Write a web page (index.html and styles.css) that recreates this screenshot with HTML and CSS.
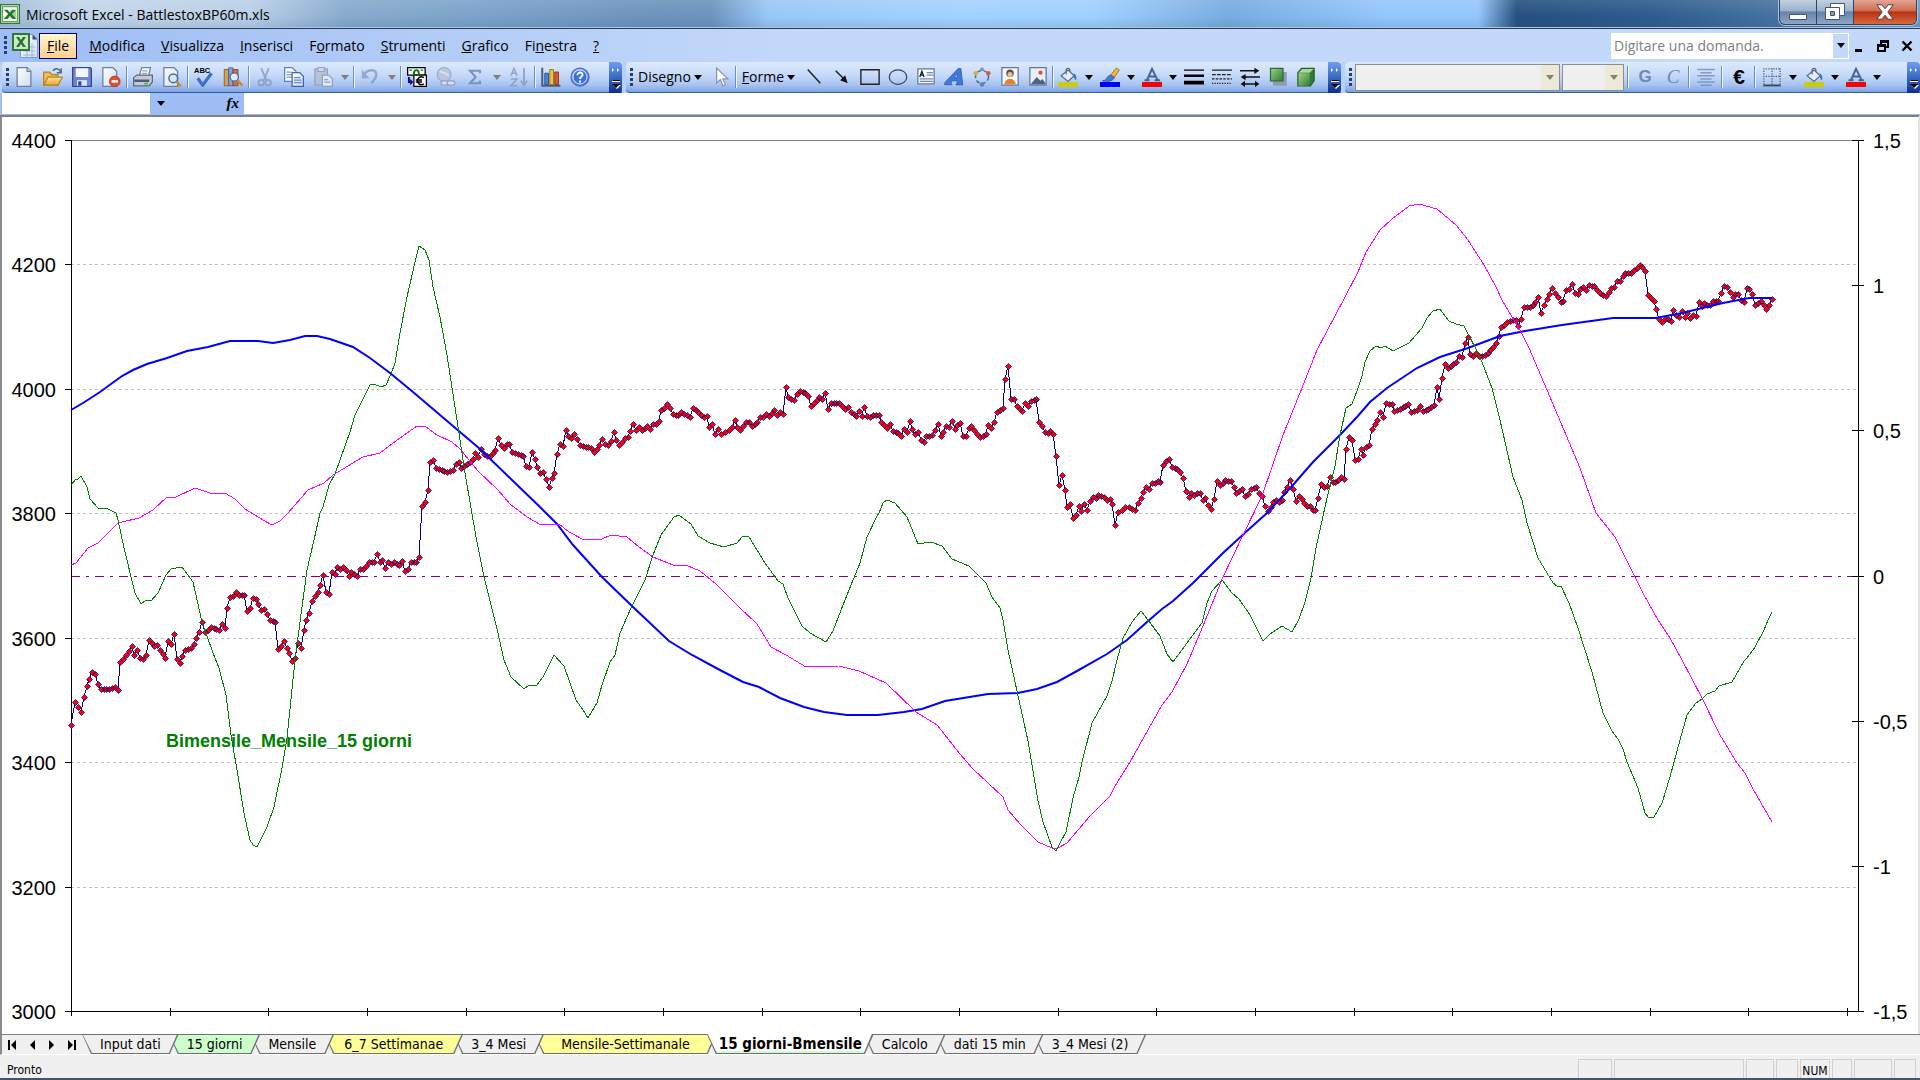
FILE: index.html
```html
<!DOCTYPE html>
<html lang="it">
<head>
    <meta charset="UTF-8">
    <meta name="viewport" content="width=device-width, initial-scale=1.0">
    <title>Microsoft Excel - BattlestoxBP60m.xls</title>
    <link rel="stylesheet" href="styles.css">
</head>
<body>
    <svg class="sprite" aria-hidden="true">
        <defs>
            <linearGradient id="greenFill" x1="0" y1="0" x2="1" y2="1"><stop offset="0" stop-color="#9fd08d"/><stop offset="1" stop-color="#2f7d33"/></linearGradient>
            <linearGradient id="blueFill" x1="0" y1="0" x2="1" y2="1"><stop offset="0" stop-color="#a9c8fa"/><stop offset="1" stop-color="#2f5fc0"/></linearGradient>
            <linearGradient id="paperFill" x1="0" y1="0" x2="1" y2="1"><stop offset="0" stop-color="#ffffff"/><stop offset="1" stop-color="#cfdcf2"/></linearGradient>
            <linearGradient id="goldFill" x1="0" y1="0" x2="0" y2="1"><stop offset="0" stop-color="#ffe9a0"/><stop offset="1" stop-color="#eda02c"/></linearGradient>
        </defs>
        <symbol id="i-arrow" viewBox="0 0 8 5"><path d="M0 0h8L4 5z" fill="currentColor"/></symbol>
        <symbol id="i-more" viewBox="0 0 13 31">
            <path d="M3 6l2 2-2 2zM8 6l2 2-2 2z" fill="#fff"/>
            <path d="M4 18h7v1H4z" fill="#000"/><path d="M3 19h8v1H3z" fill="#fff"/>
            <path d="M4 23h8l-4 4z" fill="#fff"/><path d="M3 22h8l-4 4z" fill="#000"/>
        </symbol>
        <symbol id="i-bucket" viewBox="0 0 16 16">
            <path d="M2.500 7L8 2.500l5 4.500-5 4.500z" fill="#e4ecf8" stroke="#556c92"/>
            <path d="M6.500 6V2.500c0-2 3-2 3 0V4" fill="none" stroke="#556c92"/>
            <path d="M12.500 5c2 1 2.500 3 2 5.500-1.500-.5-2-2-2-5.500z" fill="#3c6fc4"/>
            <path d="M0 12h16v4H0z" fill="#cccc0a"/>
        </symbol>
        <symbol id="i-fontcolor" viewBox="0 0 16 16">
            <path d="M2 10.500h4M10 10.500h4.500M4 10.500L8 1.500l4.500 9M5.500 7.500h5" fill="none" stroke="#44649c" stroke-width="1.600"/>
            <path d="M0 12h16v4H0z" fill="#f00"/>
        </symbol>
        <symbol id="i-excel" viewBox="0 0 16 16">
            <path d="M.5.5h15v15H.5z" fill="#e7f2e4" stroke="#2b7a35"/>
            <path d="M2 2h12v12H2z" fill="#fff" stroke="#63a663"/>
            <path d="M8 5h5v6H8z" fill="#a9d19d"/>
            <path d="M3 4.500h3l2 2.300 2-2.300h3L9.500 8l3.500 4h-3L8 9.500 6 12H3l3.500-4z" fill="#1f7a2e"/>
        </symbol>
    </svg>

    <header class="titlebar">
        <svg class="app-icon"><use href="#i-excel"/></svg>
        <h1>Microsoft Excel - BattlestoxBP60m.xls</h1>
        <div class="window-buttons">
            <button class="win-min" aria-label="Riduci a icona"><svg viewBox="0 0 18 8"><path d="M.5 1.500h17v5H.5z" fill="#fff" stroke="#45566d"/></svg></button>
            <button class="win-max" aria-label="Ripristina"><svg viewBox="0 0 20 18"><path d="M5.500.5h14v12h-14z" fill="#fff" stroke="#45566d"/><path d="M.5 4.500h14v12H.5z" fill="#fff" stroke="#45566d"/><path d="M5.500 8.500h4v4h-4z" fill="#7c98bd" stroke="#45566d"/></svg></button>
            <button class="win-close" aria-label="Chiudi"><svg viewBox="0 0 18 16"><path d="M.8.8h5L9 4.800 12.200.8h5L11.800 8l5.400 7.200h-5L9 11.200l-3.200 4h-5L6.200 8z" fill="#fff" stroke="#5a3a3a"/></svg></button>
        </div>
    </header>

    <nav class="menubar">
        <span class="grip"></span>
        <svg class="doc-icon" viewBox="0 0 26 26">
            <path d="M8.500 1.500h12l5 5v18h-17z" fill="url(#paperFill)" stroke="#7f9cc9"/>
            <path d="M20.500 1.500v5h5z" fill="#3b5174"/>
            <path d="M11 14h12M11 18h12M11 22h12M15 10v14M20 10v14" stroke="#9db7de"/>
            <path d="M1 1h16v16H1z" fill="#cfe6c8" stroke="#2b7a35" stroke-width="2"/>
            <path d="M4 4h3l2 3 2-3h3l-3.500 5 3.500 5h-3l-2-3-2 3H4l3.500-5z" fill="#1f7a2e"/>
        </svg>
        <button class="menu active"><u>F</u>ile</button>
        <button class="menu"><u>M</u>odifica</button>
        <button class="menu"><u>V</u>isualizza</button>
        <button class="menu"><u>I</u>nserisci</button>
        <button class="menu">F<u>o</u>rmato</button>
        <button class="menu"><u>S</u>trumenti</button>
        <button class="menu"><u>G</u>rafico</button>
        <button class="menu">Fi<u>n</u>estra</button>
        <button class="menu"><u>?</u></button>
        <div class="ask">
            <input type="text" placeholder="Digitare una domanda." aria-label="Digitare una domanda">
            <button aria-label="Domande recenti"><svg class="arrow"><use href="#i-arrow"/></svg></button>
        </div>
        <div class="doc-buttons">
            <button aria-label="Riduci a icona finestra"><svg viewBox="0 0 12 12"><path d="M2 9h7v3H2z"/></svg></button>
            <button aria-label="Ripristina finestra"><svg viewBox="0 0 12 12"><path d="M3 0h9v8H9v4H0V4h3zM5 3v1h4v2h1V3zM2 7v3h5V7z" fill-rule="evenodd"/></svg></button>
            <button aria-label="Chiudi finestra"><svg viewBox="0 0 12 12"><path d="M1.500 1.500l9 9M10.500 1.500l-9 9" stroke="#000" stroke-width="2.400"/></svg></button>
        </div>
    </nav>

    <div class="toolbars">
        <div class="toolbar standard">
            <span class="grip"></span>
            <button class="tool" aria-label="Nuovo"><svg viewBox="0 0 16 16"><path d="M2.500.5h8l3 3v12h-11z" fill="url(#paperFill)" stroke="#6b7f9f"/><path d="M10.500.5v3h3" fill="#dfe8f7" stroke="#6b7f9f"/></svg></button>
            <button class="tool" aria-label="Apri"><svg viewBox="0 0 16 16"><path d="M.5 14.500V4h5l1.500 2h5v8.500z" fill="#f2bd4f" stroke="#b9812a"/><path d="M.5 14.500L4 8h11.500l-3.500 6.500z" fill="url(#goldFill)" stroke="#b9812a"/><path d="M8 3c2-2.500 5-2 6 1M14.500 1v3.500H11" fill="none" stroke="#4b6a96" stroke-width="1.200"/></svg></button>
            <button class="tool" aria-label="Salva"><svg viewBox="0 0 16 16"><path d="M.5.5h14l1 1v14H.5z" fill="#6f86d6" stroke="#34468f"/><path d="M3 1h10v7H3z" fill="#f4f7ff"/><path d="M4 10.500h8V15H4z" fill="#dbe3f7"/><path d="M5 11.500h2.500V15H5z" fill="#34468f"/></svg></button>
            <button class="tool" aria-label="Autorizzazione"><svg viewBox="0 0 16 16"><path d="M1.500.5h8l3 3v12h-11z" fill="url(#paperFill)" stroke="#6b7f9f"/><circle cx="11" cy="11.500" r="4.300" fill="#e2502a" stroke="#a8381c" stroke-width=".6"/><path d="M8.500 10.500h5v2h-5z" fill="#fff"/></svg></button>
            <span class="sep"></span>
            <button class="tool" aria-label="Stampa"><svg viewBox="0 0 16 16"><path d="M5 7L7 .5h7L12.500 7z" fill="#fff" stroke="#73839e"/><path d="M7.500 3h4M7 5h4" stroke="#8fa0bb"/><path d="M.5 8.500L3 6.500h12.500V12l-2.500 3H.5z" fill="#c5ccd9" stroke="#5d6a80"/><path d="M1 10h12v2H1z" fill="#4e5d77"/><path d="M9 12.500h3V14H9z" fill="#53b33f"/></svg></button>
            <button class="tool" aria-label="Anteprima di stampa"><svg viewBox="0 0 16 16"><path d="M1.500.5h8l3 3v12h-11z" fill="url(#paperFill)" stroke="#6b7f9f"/><circle cx="9" cy="9" r="3.500" fill="#cfe6fb" stroke="#4f6a92" stroke-width="1.200"/><path d="M11.500 11.500l3.500 4" stroke="#c98a3c" stroke-width="2"/></svg></button>
            <span class="sep"></span>
            <button class="tool" aria-label="Controllo ortografia"><svg viewBox="0 0 16 16"><text x="0" y="5" class="abc">ABC</text><path d="M3 9l4 5.500L14 5" fill="none" stroke="#3f70cf" stroke-width="2.600"/></svg></button>
            <button class="tool" aria-label="Ricerche"><svg viewBox="0 0 16 16"><path d="M1 2h3.500v13H1z" fill="#d8a24a" stroke="#7d5f2c" stroke-width=".7"/><path d="M4.500.7H8V15H4.500z" fill="#86a4d9" stroke="#465f93" stroke-width=".7"/><path d="M8 2h4v13H8z" fill="#d06f45" stroke="#81452a" stroke-width=".7"/><circle cx="9" cy="8" r="3.300" fill="#dcecfb" stroke="#4f6a92"/><path d="M11.500 10.500l4 4.500" stroke="#c98a3c" stroke-width="2"/></svg></button>
            <span class="sep"></span>
            <button class="tool" aria-label="Taglia" disabled><svg viewBox="0 0 16 16"><path d="M5 1l4 9.500M11 1l-4 9.500" stroke="#8b9cbd" stroke-width="1.500"/><circle cx="5" cy="12.500" r="2.200" fill="none" stroke="#8b9cbd" stroke-width="1.500"/><circle cx="10.500" cy="12.500" r="2.200" fill="none" stroke="#8b9cbd" stroke-width="1.500"/></svg></button>
            <button class="tool" aria-label="Copia"><svg viewBox="0 0 16 16"><path d="M.5.5h6l3 3v8h-9z" fill="#fff" stroke="#5c7fc0"/><path d="M2 4h4M2 6h5M2 8h5" stroke="#7c9ad0"/><path d="M6.500 4.500h6l3 3v8h-9z" fill="url(#paperFill)" stroke="#3f65ad"/><path d="M8 8.500h5M8 10.500h6M8 12.500h6" stroke="#6489cc"/></svg></button>
            <button class="tool" aria-label="Incolla" disabled><svg viewBox="0 0 16 16"><path d="M1.500 1.500h10v13h-10z" fill="#b3bfd6" stroke="#8b9cbd"/><path d="M4 .5h5v3H4z" fill="#dbe3f2" stroke="#8b9cbd"/><path d="M7.500 6.500h5l3 3v6h-8z" fill="#e6edf9" stroke="#8b9cbd"/><path d="M9 10h3M9 12h5" stroke="#8b9cbd"/></svg></button>
            <button class="drop" aria-label="Opzioni Incolla" disabled><svg class="arrow"><use href="#i-arrow"/></svg></button>
            <span class="sep"></span>
            <button class="tool" aria-label="Annulla" disabled><svg viewBox="0 0 16 16"><path d="M3 6c4-5 10-4 10 0 0 3-2 5-4 7" fill="none" stroke="#8d9fc9" stroke-width="2"/><path d="M1.500 2v7h6z" fill="#8d9fc9"/></svg></button>
            <button class="drop" aria-label="Elenco Annulla" disabled><svg class="arrow"><use href="#i-arrow"/></svg></button>
            <span class="sep"></span>
            <button class="tool" aria-label="Conversione Euro"><svg viewBox="0 0 16 16"><path d="M.5.5h14v6H.5z" fill="#fff" stroke="#000"/><path d="M2 2h2v1H2zM11 2h2v1h-2z" fill="#008000"/><path d="M5.500 5.500c0-4 4-4 4 0" fill="none" stroke="#008000" stroke-width="1.500"/><path d="M5.500 6.500h10v9h-10z" fill="#fff" stroke="#000"/><path d="M13.500 8.500c-3-1.500-5 0-5 2.500s2 4 5 2.500M7 10.300h5M7 12h5" fill="none" stroke="#000" stroke-width="1.200"/><path d="M1.500 8v4h1" fill="none" stroke="#00008b" stroke-width="1.500"/><path d="M2.500 9.500v5L5 12z" fill="#00008b"/></svg></button>
            <button class="tool" aria-label="Collegamento ipertestuale" disabled><svg viewBox="0 0 16 16"><circle cx="6.500" cy="6" r="5.500" fill="#b9c4d9" stroke="#97a6c2"/><path d="M3 3c3 3 4 0 7 4" fill="none" stroke="#dbe3f1" stroke-width="1.500"/><rect x="4" y="11" width="6" height="3.500" rx="1.700" fill="#dbe3f1" stroke="#8b9cbd"/><rect x="9" y="11" width="6" height="3.500" rx="1.700" fill="#dbe3f1" stroke="#8b9cbd"/></svg></button>
            <button class="tool" aria-label="Somma automatica" disabled><svg viewBox="0 0 16 16"><path d="M12 5V3H4l4.500 5L4 13h8v-2" fill="none" stroke="#6f88bb" stroke-width="1.700"/></svg></button>
            <button class="drop" aria-label="Funzioni" disabled><svg class="arrow"><use href="#i-arrow"/></svg></button>
            <button class="tool" aria-label="Ordinamento crescente" disabled><svg viewBox="0 0 16 16"><path d="M1.500 7L4 1l2.500 6M2.300 5h3.400M1.500 9.500h5l-5 5.500h5" fill="none" stroke="#8b9cbd" stroke-width="1.200"/><path d="M12 1v12M9.500 11l2.500 3.500 2.500-3.500" fill="none" stroke="#8b9cbd" stroke-width="1.500"/></svg></button>
            <span class="sep"></span>
            <button class="tool" aria-label="Creazione guidata Grafico"><svg viewBox="0 0 16 16"><path d="M1 .5v14.500h14.500" fill="none" stroke="#4a5c80" stroke-width="1.600"/><path d="M3 5h3v9H3z" fill="#4d80dc" stroke="#284e95" stroke-width=".7"/><path d="M7 2h3v12H7z" fill="#f1c23c" stroke="#936f14" stroke-width=".7"/><path d="M11 4h3v10h-3z" fill="#dc5a31" stroke="#8a2f14" stroke-width=".7"/></svg></button>
            <button class="tool" aria-label="Guida"><svg viewBox="0 0 16 16"><circle cx="8" cy="8" r="7.200" fill="url(#blueFill)" stroke="#4a6fb5"/><circle cx="8" cy="8" r="5.600" fill="#3a72da" stroke="#dbe8ff" stroke-width=".8"/><path d="M6 6.500c0-3 4.500-2.500 4 0-.3 1-2 1.400-2 3" fill="none" stroke="#fff" stroke-width="1.500"/><path d="M7.200 10.800h1.600v1.500H7.200z" fill="#fff"/></svg></button>
            <button class="more" aria-label="Opzioni barra Standard"><svg><use href="#i-more"/></svg></button>
        </div>

        <div class="toolbar drawing">
            <span class="grip"></span>
            <button class="text-tool"><span>Dise<u>g</u>no</span><svg class="arrow"><use href="#i-arrow"/></svg></button>
            <button class="tool" aria-label="Seleziona oggetti"><svg viewBox="0 0 16 16"><path d="M4.500.8v12l3-2.800 2 5 2-.8-2-4.700h4z" fill="#fff" stroke="#8796b3"/></svg></button>
            <span class="sep"></span>
            <button class="text-tool"><span><u>F</u>orme</span><svg class="arrow"><use href="#i-arrow"/></svg></button>
            <button class="tool" aria-label="Linea"><svg viewBox="0 0 16 16"><path d="M3 2l10 11" stroke="#222" stroke-width="1.200"/></svg></button>
            <button class="tool" aria-label="Freccia"><svg viewBox="0 0 16 16"><path d="M3 3l7 7" stroke="#222" stroke-width="1.200"/><path d="M12.500 13L6.500 10.500l4-4z" fill="#111"/></svg></button>
            <button class="tool" aria-label="Rettangolo"><svg viewBox="0 0 16 16"><path d="M.7 2.200h14.600v11.600H.7z" fill="none" stroke="#222" stroke-width="1.100"/></svg></button>
            <button class="tool" aria-label="Ovale"><svg viewBox="0 0 16 16"><ellipse cx="8" cy="8" rx="7" ry="5.800" fill="none" stroke="#3b4657"/></svg></button>
            <button class="tool" aria-label="Casella di testo"><svg viewBox="0 0 16 16"><path d="M1.500 1.500h13v12h-13z" fill="#f7faff" stroke="#61789f"/><path d="M3 8l1.700-4.500L6.400 8M3.500 6.500h2.400" fill="none" stroke="#111"/><path d="M8.500 4.500h5M8.500 6.500h5M3 9.500h10.500M3 11.500h10.500" stroke="#7087ae"/></svg></button>
            <button class="tool" aria-label="WordArt"><svg viewBox="0 0 16 16"><path d="M.5 13l1-1.500L11.500 1l2 .3 1.500 13H9.500l1-1.500V11H6.700l-1.200 2 1 1.200H.5zM8 8.500h2.500V5.500z" fill="#4377d9" stroke="#2a55aa" stroke-width=".6"/></svg></button>
            <button class="tool" aria-label="Diagramma"><svg viewBox="0 0 16 16"><circle cx="8" cy="8" r="5.200" fill="none" stroke="#54698f" stroke-width="1.200" stroke-dasharray="3 2"/><circle cx="3" cy="5" r="1.800" fill="#e2a93c"/><circle cx="13" cy="5" r="1.800" fill="#d9573a"/><circle cx="8" cy="14" r="1.800" fill="#5d7fd0"/><circle cx="8" cy="1.800" r="1.500" fill="#7f93b8"/></svg></button>
            <button class="tool" aria-label="ClipArt"><svg viewBox="0 0 16 16"><path d="M1.500.5h13v14h-13z" fill="#f5f8fe" stroke="#61789f"/><circle cx="8" cy="5" r="3" fill="#6b4f3b"/><circle cx="8" cy="6" r="2" fill="#e8bf98"/><path d="M3.500 14c0-6 9-6 9 0z" fill="#e6812a"/></svg></button>
            <button class="tool" aria-label="Immagine"><svg viewBox="0 0 16 16"><path d="M1.500.5h13v14h-13z" fill="#e7effb" stroke="#61789f"/><path d="M2 14l5-6 3 3 1.500-1.500L14 13v1z" fill="#4d6287"/><circle cx="10" cy="4.500" r="1.700" fill="#e2562a"/></svg></button>
            <span class="sep"></span>
            <button class="tool" aria-label="Colore riempimento"><svg><use href="#i-bucket"/></svg></button>
            <button class="drop" aria-label="Scegli riempimento"><svg class="arrow"><use href="#i-arrow"/></svg></button>
            <button class="tool" aria-label="Colore linea"><svg viewBox="0 0 16 16"><path d="M8.500 6.500L13 .8l2.500 1.500-4 6z" fill="#f0b53e" stroke="#9b7226" stroke-width=".7"/><path d="M2 11c4 0 3-4 6.500-4.500l3 2C10 11.500 6 12 2 11z" fill="#4a7bd2" stroke="#2f55a0" stroke-width=".7"/><path d="M0 12h16v4H0z" fill="#00f"/></svg></button>
            <button class="drop" aria-label="Scegli colore linea"><svg class="arrow"><use href="#i-arrow"/></svg></button>
            <button class="tool" aria-label="Colore carattere"><svg><use href="#i-fontcolor"/></svg></button>
            <button class="drop" aria-label="Scegli colore carattere"><svg class="arrow"><use href="#i-arrow"/></svg></button>
            <button class="tool" aria-label="Stile linea"><svg viewBox="0 0 16 16"><path d="M0 2h16v1H0zM0 6h16v2H0zM0 11h16v3H0z"/></svg></button>
            <button class="tool" aria-label="Stile tratteggio"><svg viewBox="0 0 16 16"><path d="M0 2.500h16" stroke="#222"/><path d="M0 6h16" stroke="#222" stroke-dasharray="3 1"/><path d="M0 9.500h16" stroke="#222" stroke-dasharray="2 1"/><path d="M0 13h16" stroke="#222" stroke-dasharray="1 1"/></svg></button>
            <button class="tool" aria-label="Stile freccia"><svg viewBox="0 0 16 16"><path d="M0 3h13M3 8h13M3 13.500h10" stroke="#111" stroke-width="1.200"/><path d="M15.500 3L11.500.5v5zM.5 8L4.500 5.500v5zM15.500 13.500L12 11v5zM.5 13.500L4 11v5z" fill="#111"/></svg></button>
            <button class="tool" aria-label="Stile ombreggiatura"><svg viewBox="0 0 16 16"><path d="M4 4h11v11H4z" fill="#8d9ab0"/><path d="M2 1h10v10H2z" fill="url(#greenFill)" stroke="#2f6b35"/></svg></button>
            <button class="tool" aria-label="Stile 3D"><svg viewBox="0 0 16 16"><path d="M1.500 4.500l3-3.500h10v10l-3 4h-10z" fill="#2f7d33" stroke="#265e2b"/><path d="M2 5h9v10H2z" fill="url(#greenFill)"/><path d="M2 4.500L5 1.500h9L11 4.500z" fill="#a7d79a"/></svg></button>
            <button class="more" aria-label="Opzioni barra Disegno"><svg><use href="#i-more"/></svg></button>
        </div>

        <div class="toolbar formatting">
            <span class="grip"></span>
            <label class="combo font-name"><select aria-label="Tipo di carattere" disabled><option></option></select><span><svg class="arrow"><use href="#i-arrow"/></svg></span></label>
            <label class="combo font-size"><select aria-label="Dimensione carattere" disabled><option></option></select><span><svg class="arrow"><use href="#i-arrow"/></svg></span></label>
            <span class="sep"></span>
            <button class="tool letter" disabled><b>G</b></button>
            <button class="tool letter serif" disabled><i>C</i></button>
            <span class="sep"></span>
            <button class="tool" aria-label="Allinea al centro" disabled><svg viewBox="0 0 16 16"><path d="M1 2h14M3.500 4.500h9M1 7h14M3.500 9.500h9M1 12h14M3.500 14.500h9" stroke="#7990bd" stroke-width="1.200"/></svg></button>
            <span class="sep"></span>
            <button class="tool letter euro"><b>€</b></button>
            <span class="sep"></span>
            <button class="tool" aria-label="Bordi"><svg viewBox="0 0 16 16"><path d="M1.500 1v13M8 1v13M14.500 1v13M1 1.500h14M1 7.500h14" stroke="#555f70" stroke-dasharray="1 1"/><path d="M1 14h14v1.500H1z" fill="#39465c"/></svg></button>
            <button class="drop" aria-label="Scegli bordi"><svg class="arrow"><use href="#i-arrow"/></svg></button>
            <button class="tool" aria-label="Riempimento cella"><svg><use href="#i-bucket"/></svg></button>
            <button class="drop" aria-label="Scegli riempimento cella"><svg class="arrow"><use href="#i-arrow"/></svg></button>
            <button class="tool" aria-label="Colore testo"><svg><use href="#i-fontcolor"/></svg></button>
            <button class="drop" aria-label="Scegli colore testo"><svg class="arrow"><use href="#i-arrow"/></svg></button>
            <button class="more" aria-label="Opzioni barra Formattazione"><svg><use href="#i-more"/></svg></button>
        </div>
    </div>

    <div class="formula-bar">
        <input class="name-box" type="text" aria-label="Casella Nome">
        <div class="fx-area">
            <button aria-label="Elenco nomi"><svg class="arrow"><use href="#i-arrow"/></svg></button>
            <button class="fx">fx</button>
        </div>
        <input class="formula" type="text" aria-label="Barra della formula">
    </div>

    <main class="sheet">
        <svg id="chart" viewBox="2 117 1916 917" role="img" aria-label="Bimensile_Mensile_15 giorni"></svg>
    </main>

    <div class="tabs">
        <div class="tab-nav">
            <button aria-label="Primo foglio"><svg viewBox="0 0 8 10"><path d="M0 0h2v10H0zM8 0v10L3 5z"/></svg></button>
            <button aria-label="Foglio precedente"><svg viewBox="0 0 8 10"><path d="M7 0v10L2 5z"/></svg></button>
            <button aria-label="Foglio successivo"><svg viewBox="0 0 8 10"><path d="M1 0v10l5-5z"/></svg></button>
            <button aria-label="Ultimo foglio"><svg viewBox="0 0 8 10"><path d="M6 0h2v10H6zM0 0v10l5-5z"/></svg></button>
        </div>
        <div class="tab-list">
            <button class="tab"><span>Input dati</span></button>
            <button class="tab green"><span>15 giorni</span></button>
            <button class="tab"><span>Mensile</span></button>
            <button class="tab yellow"><span>6_7 Settimanae</span></button>
            <button class="tab"><span>3_4 Mesi</span></button>
            <button class="tab yellow wide"><span>Mensile-Settimanale</span></button>
            <button class="tab current"><span>15 giorni-Bmensile</span></button>
            <button class="tab"><span>Calcolo</span></button>
            <button class="tab"><span>dati 15 min</span></button>
            <button class="tab"><span>3_4 Mesi (2)</span></button>
        </div>
    </div>

    <footer class="status">
        <span class="ready">Pronto</span>
        <span class="cell w34"></span>
        <span class="cell w130"></span>
        <span class="cell w28"></span>
        <span class="cell w22"></span>
        <span class="cell w30">NUM</span>
        <span class="cell w20"></span>
        <span class="cell w38"></span>
        <span class="cell w22"></span>
    </footer>
    <script src="chart.js"></script>
</body>
</html>
```
FILE: styles.css
```css
* {
    box-sizing: border-box;
}
body {
    margin: 0;
    height: 100vh;
    display: flex;
    flex-direction: column;
    overflow: hidden;
    background: #f0f0f0;
    color: #000;
    font-family: "Open Sans", "Noto Sans", sans-serif;
    font-size: 14px;
}
button {
    margin: 0;
    padding: 0;
    border: 0;
    background: none;
    color: inherit;
    font: inherit;
    display: flex;
    align-items: center;
    justify-content: center;
}
input {
    border: 0;
    padding: 0;
    min-width: 0;
    font: inherit;
    background: #fff;
}
.sprite {
    position: absolute;
    width: 0;
    height: 0;
}
.arrow {
    width: 8px;
    height: 5px;
    flex: none;
}

/* title bar */
.titlebar {
    flex: none;
    height: 29px;
    display: flex;
    align-items: flex-start;
    border-bottom: 1px solid #2d3b4d;
    box-shadow: inset 0 -1px 0 #a9c6e4;
    background:
        linear-gradient(to bottom, rgba(255, 255, 255, 0.1), rgba(255, 255, 255, 0) 60%, rgba(40, 80, 130, 0.15)),
        linear-gradient(to right, #9dbbd8 0, #c3d6ea 4%, #b9d0e7 13%, #86aacd 18%, #7ba2ca 25%, #6d94bd 33%, #6a93be 37%, #98c8f6 40%, #a2d2ff 50%, #9fd0ff 57%, #78abdf 64%, #94c6fb 72%, #94c6fb 77%, #24507f 79%, #2c5b8e 86%, #47749f 93%, #6f9cc8 100%);
}
.app-icon {
    width: 20px;
    height: 20px;
    margin-top: 4px;
}
.titlebar h1 {
    margin: 5px 0 0 6px;
    font-size: 14px;
    line-height: 20px;
    font-weight: normal;
}
.window-buttons {
    display: flex;
    height: 25px;
    margin: 0 3px 0 auto;
    border: 1px solid #33435c;
    border-top: 0;
    border-radius: 0 0 6px 6px;
    overflow: hidden;
    box-shadow: 0 0 0 1px #a9c3df;
}
.win-min,
.win-max {
    width: 37px;
    border-right: 1px solid #33435c;
    background: linear-gradient(#c3d1e1, #9cb2cd 45%, #6582a8 50%, #8ba7c9);
}
.win-close {
    width: 62px;
    background: linear-gradient(#e2a593, #cf6b50 45%, #b53312 50%, #d9683e);
}
.win-min svg { width: 18px; height: 8px; margin-top: 9px; }
.win-max svg { width: 20px; height: 18px; }
.win-close svg { width: 18px; height: 16px; }

/* menu */
.menubar {
    flex: none;
    height: 33px;
    display: flex;
    align-items: center;
    padding: 0 7px 0 4px;
    background: linear-gradient(to right, #9ebdf5, #c3d9f9 42%);
}
.grip {
    flex: none;
    width: 3px;
    height: 19px;
    background: repeating-linear-gradient(#27416b 0 3px, transparent 3px 5px);
}
.doc-icon {
    width: 26px;
    height: 26px;
    margin: 0 1px 0 5px;
}
.menu {
    height: 26px;
    padding: 0 7px;
    border: 1px solid transparent;
    line-height: 20px;
    white-space: pre;
}
.menu.active {
    margin-right: 4px;
    border-color: #000080;
    background: linear-gradient(#fff4cc, #ffd091);
}
.ask {
    margin-left: auto;
    display: flex;
    width: 238px;
    height: 26px;
    border: 1px solid #fff;
    background: #fff;
}
.ask input {
    flex: 1;
    padding-left: 2px;
    color: #808080;
}
.ask input::placeholder {
    color: #808080;
}
.ask button {
    width: 15px;
    background: #c3d9f9;
}
.doc-buttons {
    display: flex;
    gap: 12px;
    margin-left: 4px;
}
.doc-buttons svg {
    width: 12px;
    height: 12px;
}
.doc-buttons button {
    width: 12px;
}

/* toolbars */
.toolbars {
    flex: none;
    display: flex;
    gap: 4px;
    height: 31px;
    padding-left: 2px;
    background: #b9d0f8;
}
.toolbar {
    display: flex;
    align-items: center;
    height: 31px;
    padding-left: 4px;
    border-bottom: 1px solid #2f5ea9;
    border-radius: 4px 0 0 4px;
    background: linear-gradient(#dde9fc, #c5d9f8 45%, #a9c5f2 75%, #7fa3e0);
}
.standard {
    flex: none;
    width: 620px;
    gap: 1px;
}
.drawing {
    flex: none;
    width: 715px;
}
.formatting {
    flex: 1;
    min-width: 0;
}
.tool {
    flex: none;
    width: 28px;
    height: 27px;
}
.tool svg {
    width: 20px;
    height: 20px;
}
.tool:disabled svg {
    opacity: 0.85;
}
.drop {
    flex: none;
    width: 14px;
    height: 27px;
    color: #000;
}
.drop:disabled {
    color: #808080;
}
.sep {
    flex: none;
    width: 2px;
    height: 22px;
    background: linear-gradient(to right, #6a8ccb 1px, #f1f6ff 1px);
}
.text-tool {
    flex: none;
    gap: 3px;
    padding: 0 5px;
    height: 27px;
    line-height: 20px;
}
.letter {
    color: #7088b8;
    font-family: "Liberation Sans", Arial, sans-serif;
    font-size: 17px;
}
.letter.serif {
    font-family: "Liberation Serif", "Times New Roman", serif;
    font-size: 19px;
}
.letter.euro {
    color: #000;
    font-size: 21px;
}
.abc {
    font: bold 6px "Liberation Sans", Arial, sans-serif;
}
.more {
    flex: none;
    width: 13px;
    height: 31px;
    margin-left: auto;
    align-self: flex-start;
    border-radius: 0 4px 4px 0;
    background: linear-gradient(#6f9ff0, #3a69c4 50%, #0a2f8a);
}
.more svg {
    width: 13px;
    height: 31px;
}
.combo {
    display: flex;
    height: 27px;
    border: 1px solid #8f8f88;
    background: #efefef;
}
.combo select {
    flex: 1;
    min-width: 0;
    appearance: none;
    border: 0;
    background: none;
}
.combo span {
    display: flex;
    align-items: center;
    justify-content: center;
    width: 18px;
    color: #808080;
    background: #ece9d8;
}
.font-name {
    width: 205px;
    margin: 0 2px 0 3px;
}
.font-size {
    width: 62px;
    margin-right: 2px;
}
.formatting .sep {
    margin: 0 2px 0 1px;
}

/* formula bar */
.formula-bar {
    flex: none;
    display: flex;
    height: 22px;
    padding: 0 0 1px 2px;
    background: #9ebdf5;
}
.name-box {
    width: 148px;
}
.fx-area {
    display: flex;
    justify-content: space-between;
    width: 94px;
    padding: 0 5px 0 7px;
}
.fx {
    font: italic bold 15px "Liberation Serif", "Times New Roman", serif;
}
.formula {
    flex: 1;
}

/* chart */
.sheet {
    flex: 1;
    min-height: 0;
    border: 2px solid #e3e3e3;
    border-top-color: #808080;
    border-left-color: #8a8a8a;
    border-bottom: 0;
    background: #fff;
}
#chart {
    display: block;
    width: 100%;
    height: 100%;
    font-family: "Liberation Sans", Arial, sans-serif;
    font-size: 20px;
}
.axis {
    stroke: #000;
    fill: none;
    shape-rendering: crispEdges;
}
.plot-top {
    stroke: #808080;
    shape-rendering: crispEdges;
}
.grid {
    stroke: #c0c0c0;
    stroke-dasharray: 3 3;
    shape-rendering: crispEdges;
}
.zero {
    stroke: #800080;
    stroke-dasharray: 9 6 3 6;
    shape-rendering: crispEdges;
}
.series {
    fill: none;
    stroke-width: 1;
    shape-rendering: crispEdges;
}
.green-line { stroke: #008000; }
.pink-line { stroke: #f0f; }
.blue-line {
    stroke: #00f;
    stroke-width: 2;
    shape-rendering: auto;
}
.price-line { stroke: #000080; }
.price-mark {
    fill: #f00;
    stroke: #000080;
    stroke-width: 0.7;
}
.caption {
    fill: #008000;
    font-size: 18px;
    font-weight: bold;
}

/* sheet tabs */
.tabs {
    flex: none;
    display: flex;
    height: 21px;
    border-top: 1px solid #808080;
    border-bottom: 1px solid #fff;
    border-left: 2px solid #8a8a8a;
    font-family: "DejaVu Sans Condensed", "DejaVu Sans", sans-serif;
}
.tab-nav {
    display: flex;
    align-items: center;
    width: 80px;
}
.tab-nav button {
    width: 20px;
    height: 19px;
}
.tab-nav svg {
    width: 8px;
    height: 10px;
}
.tab-list {
    display: flex;
    margin-top: -1px;
}
.tab {
    position: relative;
    height: 20px;
    margin-right: -10px;
    padding: 0 18px;
    background: #707070;
    clip-path: polygon(0 0, 100% 0, calc(100% - 9px) 100%, 9px 100%);
    white-space: nowrap;
    line-height: 18px;
}
.tab::before {
    content: "";
    position: absolute;
    inset: 1px 0;
    background: #f0f0f0;
    clip-path: polygon(1px 0, calc(100% - 2px) 0, calc(100% - 10px) 100%, 10px 100%);
}
.tab span {
    position: relative;
}
.tab:nth-child(1) { z-index: 9; }
.tab:nth-child(2) { z-index: 8; }
.tab:nth-child(3) { z-index: 7; }
.tab:nth-child(4) { z-index: 6; }
.tab:nth-child(5) { z-index: 5; }
.tab:nth-child(6) { z-index: 4; }
.tab:nth-child(8) { z-index: 3; }
.tab:nth-child(9) { z-index: 2; }
.tab.green::before { background: #cfc; }
.tab.yellow::before { background: #ff9; }
.tab.yellow {
    padding: 0 20px;
}
.tab.wide {
    padding: 0 27px;
}
.tab.current {
    z-index: 10;
    padding: 0 12px;
    font-size: 15px;
    font-weight: bold;
}
.tab.current::before {
    inset: 0 0 1px;
    background: linear-gradient(#fff 17px, #cfc 17px);
}

/* status bar */
.status {
    flex: none;
    display: flex;
    align-items: stretch;
    gap: 2px;
    height: 25px;
    padding: 4px 4px 0 7px;
    border-bottom: 2px solid #45536b;
    font-family: "DejaVu Sans Condensed", "DejaVu Sans", sans-serif;
    font-size: 12px;
    line-height: 22px;
}
.ready {
    flex: 1;
}
.cell {
    border: 1px solid #d0d0d0;
    border-bottom: 0;
    text-align: center;
}
.w20 { width: 20px; }
.w22 { width: 22px; }
.w28 { width: 28px; }
.w30 { width: 30px; }
.w34 { width: 34px; }
.w38 { width: 38px; }
.w130 { width: 130px; }
```
FILE: chart.js
```js
// Points are x,y pairs in the units of the chart's viewBox
const price = "71,725 75,702 78,707 81,712 84,697 87,686 89,679 92,672 95,674 98,684 101,689 109,689 115,687 118,690 120,662 126,655 132,646 134,655 137,650 140,658 143,659 146,655 149,640 152,643 154,646 157,645 160,650 165,658 168,641 171,644 174,634 177,659 180,663 182,656 185,650 191,648 194,644 196,638 199,632 202,622 205,632 211,627 219,630 222,624 225,628 227,608 230,597 233,596 236,592 239,595 244,595 247,611 250,608 253,598 256,599 258,604 261,610 264,609 267,614 270,620 275,622 278,649 281,646 284,641 287,648 289,653 292,661 295,658 298,643 301,648 304,630 306,620 309,613 312,601 315,596 318,592 320,585 323,575 326,592 329,594 332,572 335,574 337,567 340,569 343,567 346,570 349,576 351,572 357,576 360,569 363,569 369,562 374,562 377,554 380,562 382,560 385,568 388,562 391,564 394,562 399,565 402,561 405,571 408,569 411,562 416,562 419,557 422,506 425,502 428,490 430,462 433,460 436,468 447,472 453,470 456,464 459,462 " +
    "461,468 467,464 473,459 475,453 478,457 481,449 484,454 487,456 490,456 495,450 498,438 501,445 504,448 507,444 509,444 512,452 518,454 523,456 526,466 529,467 532,452 535,459 537,467 540,473 543,472 546,479 549,487 552,478 554,473 557,454 560,444 563,446 566,430 568,436 571,438 574,434 577,439 580,445 591,448 594,452 599,445 602,439 605,444 608,445 611,441 614,432 616,440 619,445 625,438 628,437 630,431 633,424 636,430 639,427 642,430 647,426 650,429 653,424 656,424 659,421 661,410 664,408 667,404 670,408 673,414 678,415 681,412 690,417 693,408 698,412 704,417 707,416 709,427 712,424 715,434 718,429 721,434 725,432 732,427 735,420 737,427 740,430 746,422 749,422 752,426 757,422 760,417 763,417 766,414 769,416 774,410 777,415 780,412 783,414 786,387 788,397 794,400 797,394 800,391 805,393 808,396 811,406 814,403 819,397 822,399 825,393 828,409 831,403 839,403 845,409 848,407 851,412 856,416 859,411 862,416 864,407 867,416 870,417 873,415 879,415 881,422 887,428 890,424 893,431 898,433 901,436 904,429 907,432 910,421 912,429 915,434 918,432 921,440 924,442 926,436 932,435 938,424 941,436 943,432 946,426 949,427 952,421 955,429 957,425 960,423 963,436 966,436 969,428 971,426 977,434 980,437 986,434 988,425 991,428 994,422 997,412 1003,408 1005,379 1008,366 1011,399 1014,399 " +
    "1017,406 1022,411 1025,403 1028,406 1031,401 1036,399 1039,422 1042,426 1045,432 1048,433 1050,431 1053,434 1056,456 1059,485 1062,475 1065,490 1067,507 1070,504 1073,518 1076,515 1079,506 1081,511 1084,504 1087,510 1090,501 1093,497 1096,498 1098,495 1104,497 1107,500 1110,499 1112,504 1115,525 1118,512 1125,507 1129,507 1135,510 1138,503 1141,498 1143,492 1146,487 1149,489 1152,483 1155,483 1158,481 1160,482 1163,465 1166,461 1169,459 1172,467 1177,469 1180,472 1183,478 1186,491 1189,497 1191,493 1194,495 1197,493 1200,493 1203,500 1205,498 1208,505 1211,509 1214,499 1217,481 1220,485 1225,480 1231,481 1234,487 1236,493 1242,489 1245,496 1248,494 1251,489 1256,487 1259,493 1262,496 1265,506 1268,511 1271,507 1273,502 1276,500 1279,502 1282,500 1284,492 1287,487 1290,480 1293,489 1296,501 1299,496 1307,506 1310,506 1313,510 1315,510 1318,498 1321,484 1324,487 1327,486 1330,477 1333,482 1335,482 1341,477 1344,479 1346,449 1349,437 1352,440 1355,460 1358,459 1361,449 1363,455 1366,447 1369,445 1372,429 1375,424 1377,420 1380,412 1383,417 1386,403 1392,404 1394,411 1400,409 1408,404 1411,412 1417,410 1420,406 1423,411 1428,409 1434,405 " +
    "1437,387 1439,399 1442,378 1445,364 1448,368 1456,362 1459,356 1462,357 1465,343 1468,337 1470,354 1473,356 1476,353 1479,356 1485,355 1490,350 1496,343 1499,336 1501,327 1507,322 1513,320 1516,320 1518,326 1521,319 1524,307 1530,307 1535,302 1538,297 1541,313 1544,305 1547,299 1549,294 1552,288 1558,297 1561,302 1563,301 1566,290 1569,289 1572,284 1575,293 1578,294 1580,289 1583,287 1586,290 1589,285 1594,286 1600,293 1606,296 1611,288 1614,287 1617,281 1620,281 1623,276 1625,273 1631,273 1640,265 1642,267 1645,271 1648,295 1654,301 1656,309 1659,319 1662,322 1665,319 1668,319 1671,321 1673,310 1676,315 1679,317 1682,311 1685,317 1687,313 1690,318 1693,315 1696,316 1699,302 1702,306 1704,303 1707,305 1710,305 1713,301 1718,301 1721,293 1724,286 1727,287 1730,292 1733,297 1735,294 1738,294 1741,300 1744,302 1747,288 1749,289 1752,294 1755,305 1761,301 1766,309 1769,305 1772,299";

const bimonthly = "71,410 83,403 100,392 122,376 133,370 147,364 167,358 187,351 208,347 230,341 258,341 273,343 290,340 305,336 317,336 330,339 353,347 370,358 390,373 413,392 433,409 460,432 480,449 512,480 541,508 557,524 573,545 602,577 633,607 669,641 692,655 718,669 743,682 759,687 780,698 804,707 824,712 847,715 878,715 904,712 922,709 945,701 988,694 1018,693 1037,689 1057,682 1077,671 1107,654 1127,640 1147,622 1162,609 1173,601 1193,583 1223,553 1247,531 1267,513 1293,485 1313,462 1340,435 1357,417 1370,402 1387,388 1417,368 1440,357 1468,348 1500,336 1525,331 1562,325 1613,318 1656,318 1682,313 1723,303 1749,298 1772,298";

const monthly = "71,565 76,563 88,548 98,543 118,523 139,518 153,510 167,497 176,497 195,488 210,493 225,493 235,499 245,509 263,520 272,525 280,521 288,513 308,490 324,483 333,475 363,457 380,453 400,438 417,426 425,426 437,435 452,442 460,449 478,471 498,490 510,504 527,517 541,525 559,524 569,532 584,540 602,539 611,535 627,537 639,547 653,557 673,565 688,566 700,571 716,584 739,607 757,624 771,647 786,655 806,667 839,666 859,671 886,683 916,712 937,725 960,754 973,769 1003,797 1008,810 1020,824 1038,842 1052,848 1058,848 1067,843 1090,816 1110,796 1115,786 1130,762 1162,705 1172,692 1187,664 1203,626 1223,577 1243,535 1262,496 1283,435 1302,388 1317,350 1345,297 1358,272 1366,252 1380,230 1392,219 1409,206 1419,204 1437,209 1456,225 1468,240 1484,265 1496,287 1502,300 1521,332 1529,348 1547,390 1580,468 1596,513 1615,537 1636,579 1643,593 1658,620 1670,638 1682,660 1702,698 1720,735 1737,763 1745,773 1753,789 1772,822";

const fortnight = "71,485 76,479 78,479 81,476 87,487 90,499 98,508 108,509 116,513 118,520 124,548 135,593 141,604 146,600 151,601 158,593 166,575 171,569 182,567 193,582 202,622 213,653 219,668 226,695 231,735 237,770 244,813 250,840 253,845 257,847 267,827 274,807 282,768 287,738 295,660 302,607 307,570 314,540 320,513 323,507 329,485 335,474 350,432 355,415 363,399 370,385 374,384 381,387 386,385 391,374 395,363 400,333 407,297 415,262 419,246 425,250 429,260 433,287 440,317 447,355 455,407 465,473 476,537 484,577 498,633 504,660 511,677 524,689 529,685 536,686 543,677 554,655 564,666 576,700 583,710 588,718 597,703 602,685 610,662 615,655 620,633 631,608 645,580 653,555 661,535 674,517 679,515 691,524 698,536 710,543 724,547 737,543 743,536 749,537 765,563 778,581 783,584 788,598 802,626 810,633 826,642 833,631 841,610 849,590 860,563 867,537 876,518 879,513 883,503 887,500 895,503 907,517 918,544 931,542 942,546 952,559 969,566 986,583 992,597 1000,608 1003,620 1008,650 1017,691 1028,741 1038,801 1043,822 1052,847 1056,851 1060,843 1066,832 1073,798 1079,777 1082,762 1092,723 1107,696 1112,681 1117,660 1123,638 1132,622 1141,611 1148,620 1160,636 1167,654 1173,662 1187,643 1202,623 1207,603 1212,591 1222,580 1232,593 1239,599 1250,615 1263,641 1270,634 1282,626 1292,632 1299,619 1305,602 1311,578 1316,548 1327,498 1335,466 1340,435 1346,408 1352,404 1357,391 1362,376 1365,362 1370,351 1376,346 1381,348 1385,346 1393,351 1409,343 1422,328 1427,318 1433,311 1440,309 1449,321 1456,324 1464,326 1480,357 1492,388 1500,420 1513,477 1522,500 1527,523 1538,558 1553,583 1557,586 1561,586 1569,603 1578,628 1592,672 1603,713 1612,731 1618,739 1623,749 1627,762 1638,788 1645,813 1648,817 1654,817 1662,803 1670,777 1680,740 1687,715 1696,703 1702,699 1707,694 1715,691 1719,686 1732,682 1744,661 1747,658 1755,647 1764,630 1768,620 1772,612";

const chart = document.getElementById("chart");
const left = 71, right = 1858, top0 = 140, bottom = 1011;

function add(name, attrs, text) {
    const el = document.createElementNS("http://www.w3.org/2000/svg", name);
    for (const key in attrs) el.setAttribute(key, attrs[key]);
    if (text) el.textContent = text;
    chart.appendChild(el);
}

function line(cls, x1, y1, x2, y2) {
    add("path", { class: cls, d: `M${x1} ${y1}L${x2} ${y2}` });
}

// horizontal grid and left scale
for (let v = 3000; v <= 4400; v += 200) {
    const y = Math.round(bottom - (v - 3000) / 1400 * (bottom - top0)) + 0.5;
    if (v > 3000 && v < 4400) line("grid", left, y, right, y);
    if (v === 4400) line("plot-top", left, y, right, y);
    line("axis", left - 6, y, left + 1, y);
    add("text", { x: 56, y: y + 7, "text-anchor": "end" }, v);
}

// right scale
for (let i = -3; i <= 3; i++) {
    const y = Math.round((top0 + bottom) / 2 - i * (bottom - top0) / 6) + 0.5;
    if (i === 0) line("zero", left, y, right, y);
    line("axis", right - 6, y, right + 6, y);
    add("text", { x: 1873, y: y + 7 }, String(i / 2).replace(".", ","));
}

// axes
line("axis", left + 0.5, top0, left + 0.5, bottom);
line("axis", right + 0.5, top0, right + 0.5, bottom);
line("axis", left, bottom + 0.5, right, bottom + 0.5);
for (let k = 0; k <= 18; k++) {
    const x = Math.round(left + k * 98.67) + 0.5;
    line("axis", x, bottom - 3, x, bottom + 5);
}

add("text", { class: "caption", x: 166, y: 747 }, "Bimensile_Mensile_15 giorni");

// price line with a marker on every bar (a bar is about 3 units wide)
add("polyline", { class: "series price-line", points: price });
const pts = price.split(" ").map(p => p.split(",").map(Number));
let marks = "";
pts.forEach(([x, y], i) => {
    const [nx, ny] = pts[i + 1] || [x + 1, y];
    const n = Math.max(1, Math.round((nx - x) / 3));
    for (let k = 0; k < n; k++) {
        const mx = Math.round(x + (nx - x) * k / n) + 0.5;
        const my = Math.round(y + (ny - y) * k / n) + 0.5;
        marks += `M${mx - 3} ${my}l3 -3 3 3 -3 3z`;
    }
});
add("path", { class: "price-mark", d: marks });
add("polyline", { class: "series blue-line", points: bimonthly });
add("polyline", { class: "series pink-line", points: monthly });
add("polyline", { class: "series green-line", points: fortnight });
```
